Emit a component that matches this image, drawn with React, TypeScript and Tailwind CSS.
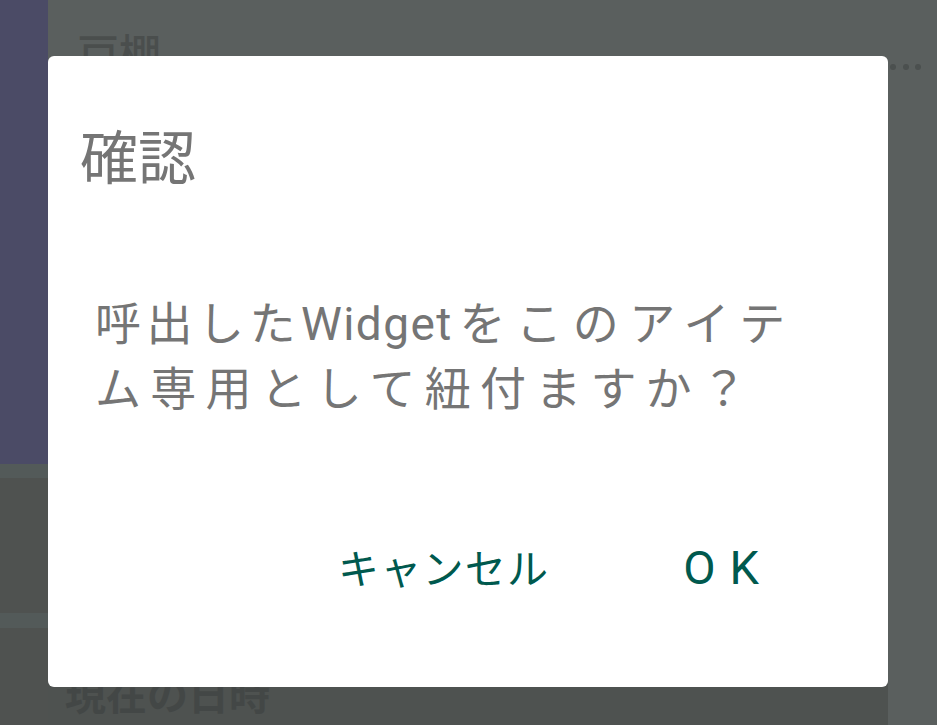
import React from "react";

const jp = { fontFamily: 'Roboto, "Noto Sans CJK JP", sans-serif' };

export default function App() {
  return (
    <div className="relative w-[937px] h-[725px] overflow-hidden bg-[#5a5f5e] flex" style={jp}>
      {/* left column */}
      <div className="w-[48px] flex flex-col shrink-0">
        <div className="h-[464px] bg-[#4b4b66]" />
        <div className="h-[14px] bg-[#535a59]" />
        <div className="h-[135px] bg-[#4f5250]" />
        <div className="h-[15px] bg-[#535a59]" />
        <div className="flex-1 bg-[#4f5250]" />
      </div>
      {/* main */}
      <div className="flex-1 flex flex-col">
        <div className="flex-1 relative">
          <div className="pl-[29px] pt-[35px] text-[42px] font-medium text-[#4a4e4d] leading-none">戸棚</div>
          <div className="absolute left-[842px] top-[64px] flex gap-[6.5px]">
            <span className="w-[6px] h-[6px] rounded-full bg-[#4b504f]" />
            <span className="w-[6px] h-[6px] rounded-full bg-[#4b504f]" />
            <span className="w-[6px] h-[6px] rounded-full bg-[#4b504f]" />
          </div>
        </div>
        <div className="h-[49px] bg-[#4e5250] mr-[49px] pl-[17px] text-[41px] font-bold text-[#434746] leading-none">
          現在の日時
        </div>
      </div>

      {/* dialog */}
      <div className="absolute left-[48px] top-[56px] w-[840px] h-[631px] bg-white rounded-[6px] flex flex-col">
        <div className="pl-[32px] pt-[74px] text-[58px] leading-none text-[#757575]">確認</div>
        <div className="pl-[47px] pt-[104px] text-[46px] leading-[65px] text-[#757575] tracking-[0.18em]">
          <span className="tracking-[0.12em]">呼出した</span>
          <span className="tracking-[0.03em]">Widge</span>t
          <span className="tracking-[0.23em]">をこのアイテ</span>
          <br />
          <span className="tracking-[0.2em]">ム専用として紐付ますか？</span>
        </div>
        <div className="flex-1" />
        <div className="flex justify-end items-start pr-[115px] pb-[96px] gap-[134px] text-[#00594e]">
          <span className="mt-[6px] text-[41px] leading-none tracking-[0.03em]">キャンセル</span>
          <span className="text-[47px] leading-none tracking-[14px]">OK</span>
        </div>
      </div>
    </div>
  );
}
